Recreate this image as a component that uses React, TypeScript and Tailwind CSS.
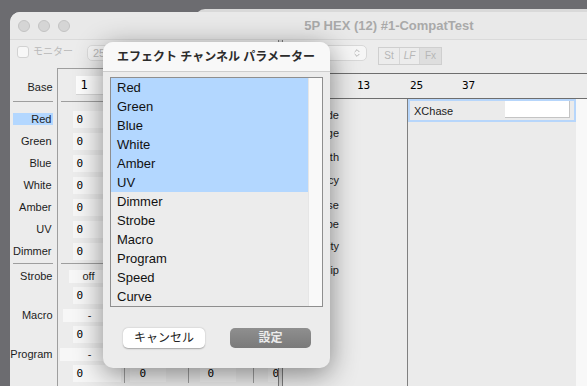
import { ChevronsUpDown } from "lucide-react";

const channels = ["Red", "Green", "Blue", "White", "Amber", "UV", "Dimmer"];

const effectParams = [
  "Red",
  "Green",
  "Blue",
  "White",
  "Amber",
  "UV",
  "Dimmer",
  "Strobe",
  "Macro",
  "Program",
  "Speed",
  "Curve",
];

const fxLabels = [
  { name: "Mode", cls: "h-[19px]" },
  { name: "Range", cls: "h-[18px]" },
  { name: "Width", cls: "h-[24px]" },
  { name: "Frequency", cls: "h-[23px]" },
  { name: "Phase", cls: "h-[25px]" },
  { name: "Strobe", cls: "h-[19px]" },
  { name: "Density", cls: "h-[22px]" },
  { name: "Flip", cls: "h-[24px]" },
];

function ZeroRow({ tall }: { tall?: boolean }) {
  return (
    <div className={`flex ${tall ? "h-[22px]" : "h-[19px]"} items-center`}>
      <div className="flex h-full w-[66px] items-center pl-[15px]">
        <div className="h-[17px] w-[48px] bg-[#f6f6f6] pl-[4px] font-['DejaVu_Sans_Mono',monospace] text-[11px] leading-[17px] text-black">
          0
        </div>
      </div>
      <div className="flex h-full w-[64px] items-center border-l border-[#9e9e9e] pl-[5px]">
        <div className="h-[17px] w-[36px] bg-[#f3f3f3] pl-[10px] font-['DejaVu_Sans_Mono',monospace] text-[11px] leading-[17px] text-black">
          0
        </div>
      </div>
      <div className="flex h-full w-[65px] items-center border-l border-[#9e9e9e] pl-[11px]">
        <div className="h-[17px] w-[36px] bg-[#f3f3f3] pl-[8px] font-['DejaVu_Sans_Mono',monospace] text-[11px] leading-[17px] text-black">
          0
        </div>
      </div>
      <div className="flex h-full flex-1 items-center border-l border-[#9e9e9e] pl-[14px]">
        <div className="h-[17px] w-[12px] bg-[#f3f3f3] pl-[5px] font-['DejaVu_Sans_Mono',monospace] text-[11px] leading-[17px] text-black">
          0
        </div>
      </div>
    </div>
  );
}

function PopRow({ text, cls }: { text: string; cls: string }) {
  return (
    <div className="flex h-[20px] items-center">
      <div className="flex h-full w-[66px] items-center">
        <div className={`h-[13px] shrink-0 ${cls} bg-[#f7f7f7] text-center text-[11px] leading-[13px] text-[#222]`}>
          {text}
        </div>
      </div>
      <div className="h-full w-[64px] border-l border-[#9e9e9e]" />
      <div className="h-full w-[65px] border-l border-[#9e9e9e]" />
      <div className="h-full flex-1 border-l border-[#9e9e9e]" />
    </div>
  );
}

export default function App() {
  return (
    <div className="relative h-[386px] w-[587px] overflow-hidden bg-[#6c6c70] font-['Liberation_Sans','Noto_Sans_CJK_JP',sans-serif]">
      {/* window behind */}
      <div className="absolute left-[195px] top-[9px] h-[60px] w-[420px] rounded-t-[10px] bg-[#d9d9d9]" />

      {/* main window */}
      <div className="absolute left-[10px] top-[12px] flex h-[400px] w-[600px] flex-col overflow-hidden rounded-t-[10px] bg-[#ececec]">
        {/* title bar */}
        <div className="flex h-[28px] shrink-0 items-center border-b border-[#dadada] bg-[#e9e9e9] pl-[8px]">
          <div className="flex gap-[8px]">
            <div className="h-[12px] w-[12px] rounded-full border border-[#c3c3c3] bg-[#d5d5d5]" />
            <div className="h-[12px] w-[12px] rounded-full border border-[#c3c3c3] bg-[#d5d5d5]" />
            <div className="h-[12px] w-[12px] rounded-full border border-[#c3c3c3] bg-[#d5d5d5]" />
          </div>
          <div className="ml-[140px] w-[358px] text-center text-[13px] font-bold text-[#a9a9a9]">
            5P HEX (12) #1-CompatTest
          </div>
        </div>

        <div className="flex flex-1">
          {/* left section */}
          <div className="flex w-[268px] flex-col">
            <div className="flex h-[28px] items-start pt-[5px]">
              <div className="ml-[7px] mt-[1px] h-[12px] w-[12px] rounded-[3px] border border-[#d2d2d2] bg-[#f7f7f7]" />
              <span className="ml-[4px] text-[10px] leading-[14px] text-[#b9b9b9]">モニター</span>
              <div className="ml-[14px] h-[16px] w-[60px] rounded-[5px] border border-[#dadada] bg-[#f4f4f4] pl-[5px] text-[11px] leading-[14px] text-[#b8b8b8]">
                256
              </div>
            </div>

            <div className="flex flex-1">
              {/* labels */}
              <div className="flex w-[47px] flex-col text-[11px] text-[#1c1c1c]">
                <div className="h-[33px] pr-[4px] pt-[13px] text-right leading-[12px]">Base</div>
                <div className="ml-[3px] mr-[4px] border-b border-[#9e9e9e]" />
                <div className="h-[6px]" />
                {channels.map((c, i) => (
                  <div key={c} className="flex h-[22px] items-center">
                    <div
                      className={`ml-[3px] mr-[4px] h-[12px] flex-1 pr-[1px] text-right leading-[12px] ${
                        i === 0 ? "bg-[#b3d7ff]" : ""
                      }`}
                    >
                      {c}
                    </div>
                  </div>
                ))}
                <div className="ml-[3px] mr-[4px] mt-[1px] border-b border-[#9e9e9e]" />
                <div className="h-[2px]" />
                {["Strobe", "Macro", "Program"].map((c) => (
                  <div key={c} className="h-[39px]">
                    <div className="flex h-[20px] items-center justify-end pr-[4px] leading-[12px]">{c}</div>
                  </div>
                ))}
              </div>

              {/* grid */}
              <div className="flex flex-1 flex-col border-l border-t border-[#9e9e9e]">
                <div className="flex h-[32px]">
                  <div className="w-[66px] pl-[18px] pt-[7px]">
                    <div className="h-[19px] w-[48px] border-b border-r border-[#d6d6d6] bg-[#fdfdfd] pl-[5px] font-['DejaVu_Sans_Mono',monospace] text-[12px] leading-[19px] text-black">
                      1
                    </div>
                  </div>
                  <div className="w-[64px] border-l border-[#9e9e9e]" />
                  <div className="w-[65px] border-l border-[#9e9e9e]" />
                  <div className="flex-1 border-l border-[#9e9e9e]" />
                </div>
                <div className="ml-[3px] border-b border-[#9e9e9e]" />
                <div className="flex h-[6px]">
                  <div className="w-[66px]" />
                  <div className="w-[64px] border-l border-[#9e9e9e]" />
                  <div className="w-[65px] border-l border-[#9e9e9e]" />
                  <div className="flex-1 border-l border-[#9e9e9e]" />
                </div>
                {channels.map((c) => (
                  <ZeroRow key={c} tall />
                ))}
                <div className="ml-[3px] mt-[1px] border-b border-[#9e9e9e]" />
                <div className="flex h-[2px]">
                  <div className="w-[66px]" />
                  <div className="w-[64px] border-l border-[#9e9e9e]" />
                  <div className="w-[65px] border-l border-[#9e9e9e]" />
                  <div className="flex-1 border-l border-[#9e9e9e]" />
                </div>
                <PopRow text="off" cls="ml-[11px] w-[40px]" />
                <ZeroRow />
                <PopRow text="-" cls="ml-[5px] w-[54px]" />
                <ZeroRow />
                <PopRow text="-" cls="ml-[2px] w-[60px]" />
                <ZeroRow />
              </div>
            </div>
          </div>

          {/* divider */}
          <div className="w-[5px] border-x border-[#7c7c7c] bg-[#d8d8d8]" />

          {/* right section */}
          <div className="flex flex-1 flex-col">
            <div className="flex h-[34px] items-start border-b border-[#6e6e6e]">
              <div className="ml-[7px] mt-[5px] flex h-[16px] w-[77px] items-center justify-end rounded-[5px] border border-[#d8d8d8] bg-[#f6f6f6] pr-[4px]">
                <ChevronsUpDown className="h-[10px] w-[10px] text-[#a8a8a8]" strokeWidth={2} />
              </div>
              <div className="ml-[11px] mt-[7px] flex h-[18px] border border-[#cfcfcf] text-[10px] leading-[16px] text-[#b6b6b6]">
                <div className="w-[20px] text-center">St</div>
                <div className="w-[20px] border-l border-[#d6d6d6] text-center italic">LF</div>
                <div className="w-[22px] border-l border-[#d6d6d6] bg-[#dedede] text-center">Fx</div>
              </div>
            </div>

            <div className="flex h-[24px] items-center pl-[74px] font-['DejaVu_Sans_Mono',monospace] text-[11px] text-black">
              <div className="w-[53px]">13</div>
              <div className="w-[52px]">25</div>
              <div className="w-[52px]">37</div>
            </div>

            <div className="flex flex-1 border-t border-[#6e6e6e]">
              <div className="flex w-[124px] flex-col pr-[68px] pt-[3px] text-[11px] text-[#1c1c1c]">
                {fxLabels.map((l) => (
                  <div key={l.name} className={`flex ${l.cls} items-end justify-end whitespace-nowrap leading-[12px]`}>
                    {l.name}
                  </div>
                ))}
              </div>
              <div className="w-[169px] border-l border-[#808080] bg-[#ebebeb]">
                <div className="flex h-[23px] items-start border-2 border-[#b7d6fb] pl-[4px] pr-[4px]">
                  <span className="mt-[3px] text-[11px] leading-[14px] text-[#1c1c1c]">XChase</span>
                  <div className="ml-auto h-[17px] w-[65px] border-b border-r border-[#c4c4c4] bg-white" />
                </div>
              </div>
              <div className="flex-1 bg-[#f8f8f8]" />
            </div>
          </div>
        </div>
      </div>

      {/* sheet dialog */}
      <div className="absolute left-[103px] top-[42px] flex h-[326px] w-[227px] flex-col overflow-hidden rounded-[10px] bg-[#ececec] shadow-[0_6px_28px_rgba(0,0,0,0.45)]">
        <div className="flex h-[30px] shrink-0 items-center whitespace-nowrap border-b border-[#cdcdcd] bg-[#f8f8f8] pl-[14px] text-[12px] font-bold text-[#2b2b2b]">
          エフェクト チャンネル パラメーター
        </div>
        <div className="ml-[7px] mt-[5px] flex h-[230px] w-[213px] border border-[#8e8e8e]">
          <div className="flex w-[197px] flex-col">
            {effectParams.map((p, i) => (
              <div
                key={p}
                className={`h-[19px] pl-[6px] text-[13px] leading-[19px] text-[#111] ${
                  i < 6 ? "bg-[#b3d7ff]" : ""
                }`}
              >
                {p}
              </div>
            ))}
          </div>
          <div className="flex-1 border-l border-[#e6e6e6] bg-[#f9f9f9]" />
        </div>
        <div className="mt-[21px] flex">
          <div className="ml-[20px] h-[20px] w-[82px] rounded-[5px] bg-white text-center text-[12px] leading-[20px] text-[#222] shadow-[0_0.5px_1.5px_rgba(0,0,0,0.3)]">
            キャンセル
          </div>
          <div className="ml-[25px] h-[20px] w-[81px] rounded-[5px] bg-gradient-to-b from-[#8f8f8f] to-[#7a7a7a] text-center text-[12px] font-bold leading-[20px] text-[#ececec]">
            設定
          </div>
        </div>
      </div>
    </div>
  );
}
